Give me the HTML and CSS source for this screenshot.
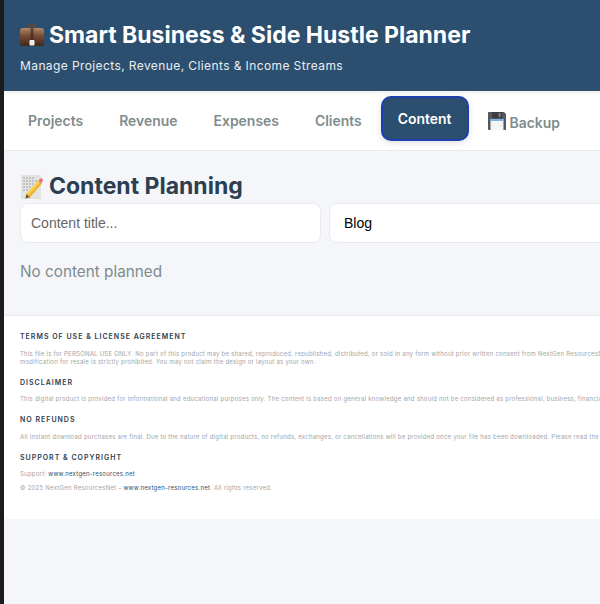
FILE: index.html
```html
<!DOCTYPE html>
<html lang="en">
<head>
    <meta charset="UTF-8">
    <meta name="viewport" content="width=device-width, initial-scale=1.0">
    <title>Smart Business &amp; Side Hustle Planner</title>
    <link rel="stylesheet" href="styles.css">
</head>
<body>
    <div class="app">
        <header class="header">
            <h1>
                <svg class="emoji-brief" viewBox="0 0 24 22" aria-hidden="true">
                    <defs>
                        <linearGradient id="briefBody" x1="0" y1="0" x2="0" y2="1">
                            <stop offset="0" stop-color="#b08a6c"/>
                            <stop offset="0.4" stop-color="#7a4f38"/>
                            <stop offset="1" stop-color="#3f261b"/>
                        </linearGradient>
                    </defs>
                    <path d="M7.500 5V2.200C7.500 1.200 8.200.6 9.200.6h5.600c1 0 1.700.6 1.700 1.600V5h-1.800V2.400H9.300V5z" fill="#6b4531"/>
                    <rect x="0" y="4" width="24" height="18" rx="2.500" fill="url(#briefBody)"/>
                    <rect x="10.500" y="4" width="3" height="12" fill="#3d2418" opacity="0.65"/>
                    <rect x="9.500" y="16" width="5" height="5.500" rx="0.800" fill="#f3f0ea"/>
                </svg>
                Smart Business &amp; Side Hustle Planner
            </h1>
            <p>Manage Projects, Revenue, Clients &amp; Income Streams</p>
        </header>

        <nav class="tabs">
            <button class="tab">Projects</button>
            <button class="tab">Revenue</button>
            <button class="tab">Expenses</button>
            <button class="tab">Clients</button>
            <button class="tab active">Content</button>
            <button class="tab tab-backup">
                <svg class="emoji-floppy" viewBox="0 0 18 18" aria-hidden="true">
                    <path d="M0 1C0 .4.4 0 1 0h15l2 2v15c0 .6-.4 1-1 1H1c-.6 0-1-.4-1-1z" fill="#55595d"/>
                    <rect x="4" y="0" width="10" height="6" fill="#3a3e42"/>
                    <rect x="10.500" y="1" width="2.200" height="4" fill="#7d8287"/>
                    <rect x="2.500" y="7" width="13" height="11" fill="#f4f5f7"/>
                    <rect x="2.500" y="7" width="13" height="2" fill="#7fb0e6"/>
                </svg>
                Backup
            </button>
        </nav>

        <main class="content">
            <h2>
                <svg class="emoji-memo" viewBox="0 0 22 24" aria-hidden="true">
                    <rect x="0" y="0" width="20" height="24" fill="#e3e3e1"/>
                    <g stroke="#8f9294" stroke-width="0.800" stroke-dasharray="2 1">
                        <line x1="2" y1="3" x2="14" y2="3"/>
                        <line x1="2" y1="6" x2="16" y2="6"/>
                        <line x1="2" y1="9" x2="13" y2="9"/>
                        <line x1="2" y1="12" x2="10" y2="12"/>
                        <line x1="2" y1="15" x2="7" y2="15"/>
                    </g>
                    <path d="M17.500 5.500l3.600 3L9 22.200l-4.600 1.400 1-4.700z" fill="#eeb32c"/>
                    <path d="M17.500 5.500l1.700 1.400L7 21l-1.600-2.100z" fill="#f8d24e"/>
                    <path d="M17.500 5.500l1.600-1.800c.6-.6 1.400-.6 2 0l.5.5c.6.6.6 1.400 0 2L20 8.500z" fill="#e8747a"/>
                    <path d="M5.400 18.900L9 22.200l-4.600 1.400z" fill="#7a5a3c"/>
                </svg>
                Content Planning
            </h2>
            <div class="form-row">
                <input class="field" type="text" placeholder="Content title...">
                <select class="field">
                    <option>Blog</option>
                </select>
            </div>
            <p class="empty">No content planned</p>
        </main>

        <footer class="legal">
            <h4>Terms of Use &amp; License Agreement</h4>
            <p>This file is for PERSONAL USE ONLY. No part of this product may be shared, reproduced, republished, distributed, or sold in any form without prior written consent from NextGen ResourcesNet. Any redistribution or<br>modification for resale is strictly prohibited. You may not claim the design or layout as your own.</p>
            <h4>Disclaimer</h4>
            <p>This digital product is provided for informational and educational purposes only. The content is based on general knowledge and should not be considered as professional, business, financial, or legal advice.</p>
            <h4>No Refunds</h4>
            <p>All instant download purchases are final. Due to the nature of digital products, no refunds, exchanges, or cancellations will be provided once your file has been downloaded. Please read the product description carefully.</p>
            <h4>Support &amp; Copyright</h4>
            <p>Support: <a href="#">www.nextgen-resources.net</a></p>
            <p>&copy; 2025 NextGen ResourcesNet &ndash; <a href="#">www.nextgen-resources.net</a>. All rights reserved.</p>
        </footer>
    </div>
</body>
</html>
```

FILE: styles.css
```css
* {
    box-sizing: border-box;
}
html, body {
    margin: 0;
    height: 100%;
    overflow: hidden;
}
body {
    font-family: Inter, "Liberation Sans", sans-serif;
    background-color: #f4f6fa;
    border-left: 4px solid #1c1c1e;
}
.app {
    width: 1000px;
}
.header {
    background-color: #2c4f6f;
    color: #fff;
    height: 91px;
    padding: 20.5px 16px;
}
.header h1 {
    margin: 0;
    font-size: 23px;
    line-height: 29px;
    font-weight: 700;
    display: flex;
    align-items: center;
    gap: 5px;
}
.emoji-brief {
    width: 24px;
    height: 22px;
}
.header p {
    margin: 8px 0 0;
    font-size: 12px;
    line-height: 16px;
    letter-spacing: 0.4px;
    opacity: 0.9;
}
.tabs {
    display: flex;
    align-items: flex-start;
    gap: 2px;
    height: 60px;
    padding: 7px 7px;
    background-color: #fff;
    border-bottom: 1px solid #e8ecef;
    box-shadow: inset 0 6px 6px -6px rgba(0, 0, 0, 0.12);
}
.tab {
    font-family: inherit;
    font-size: 13.95px;
    line-height: 17px;
    font-weight: 600;
    color: #7f8c8d;
    background: none;
    border: 2px solid transparent;
    border-radius: 10px;
    padding: 12px 15px;
    cursor: pointer;
}
.tab.active {
    background-color: #2c4f6f;
    color: #fff;
    border-color: #1e40af;
    transform: translateY(-2px);
    box-shadow: 0 2px 6px rgba(0, 0, 0, 0.12);
}
.tab-backup {
    display: flex;
    align-items: flex-end;
    gap: 4px;
    padding-top: 12px;
}
.emoji-floppy {
    width: 18px;
    height: 18px;
    margin-bottom: 1px;
}
.content {
    height: 164px;
    padding: 20px 16px;
}
.content h2 {
    margin: 0;
    font-size: 23px;
    line-height: 31px;
    font-weight: 700;
    color: #2c3e50;
    display: flex;
    align-items: center;
    gap: 5px;
}
.emoji-memo {
    width: 24px;
    height: 24px;
}
.form-row {
    display: flex;
    gap: 8px;
    margin-top: 1px;
}
.field {
    width: 301px;
    height: 40px;
    padding: 0 10px;
    font-family: "Liberation Sans", sans-serif;
    font-size: 14px;
    color: #000;
    background-color: #fff;
    border: 1px solid #e8ecef;
    border-radius: 8px;
    appearance: none;
}
.field::placeholder {
    color: #666;
}
select.field {
    padding-left: 14px;
}
.empty {
    margin: 19px 0 0;
    font-size: 15.3px;
    line-height: 20px;
    color: #7f8c8d;
}
.legal {
    height: 204px;
    padding: 16px;
    background-color: #fff;
    border-top: 1px solid #e8ecef;
}
.legal h4 {
    margin: 0 0 8.5px;
    font-size: 7px;
    line-height: 9px;
    font-weight: 600;
    letter-spacing: 1px;
    text-transform: uppercase;
    color: #2c3e50;
}
.legal p {
    margin: 0 0 6px;
    font-size: 6px;
    line-height: 8px;
    letter-spacing: 0.24px;
    color: #a0a5a8;
    white-space: nowrap;
}
.legal p + h4 {
    margin-top: 12px;
}
.legal a {
    color: #2c4f6f;
    text-decoration: none;
}
```
